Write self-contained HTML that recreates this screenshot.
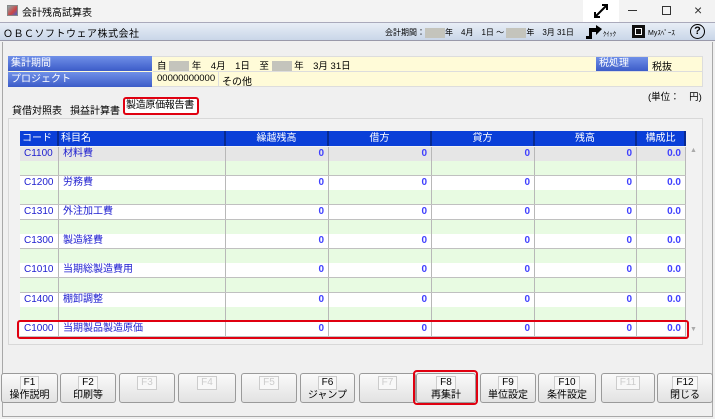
<!DOCTYPE html>
<html><head><meta charset="utf-8"><style>
*{margin:0;padding:0;box-sizing:border-box}
body{width:715px;height:419px;overflow:hidden;background:#f0f0f0;font-family:"Liberation Sans","Noto Sans CJK JP",sans-serif;font-size:10px;color:#000;position:relative}
.a{position:absolute;white-space:nowrap}
.row{position:absolute;left:20px;width:666px;height:15px;border-bottom:1px solid #c0c0c0;display:grid;grid-template-columns:39px 167px 103px 103px 103px 102px 49px;background:#fff}
.row.g{background:#e8fbe2}
.row div{height:14px;border-right:1px solid #b8b8b8;line-height:14px;font-size:10px;color:#2020d0;padding:0 4px;white-space:nowrap;overflow:hidden}
.row div.r{text-align:right;font-weight:bold;color:#4040ff}
.hd{position:absolute;top:0;height:15px;background:#0a3fd8;color:#fff;border-right:2px solid #082a90;line-height:15px;text-align:center;font-size:10px}
.btn{position:absolute;top:373px;height:30px;background:linear-gradient(#fafafa,#e2e2e2);border:1px solid #9a9a9a;border-radius:3px;text-align:center;font-size:10px;line-height:12px}
.btn .k{display:inline-block;margin-top:2px;padding:0 3px;border:1px solid #ccc;background:#f8f8f8}
.btn.d .k{color:#ccc}
.lb{background:linear-gradient(#7090e8,#3c5cc8);color:#fff;padding-left:3px}
.gy{display:inline-block;width:20px;height:10px;background:#c4c4bc;vertical-align:middle}
</style></head><body>
<div class="a" style="left:0;top:0;width:715px;height:22px;background:#f3f3f3"></div>
<div class="a" style="left:7px;top:5px;width:11px;height:11px;background:linear-gradient(135deg,#8aa 0,#c44 60%,#46c 100%);border:1px solid #888"></div>
<div class="a" style="left:22px;top:4px;font-size:10px">会計残高試算表</div>
<div class="a" style="left:583px;top:0;width:36px;height:22px;background:#fff"></div>
<svg class="a" style="left:592px;top:3px" width="18" height="16"><path d="M3 14 L15 2 M10 2 H15 V7 M3 9 V14 H8" stroke="#000" stroke-width="2" fill="none"/></svg>
<div class="a" style="left:628px;top:10px;width:9px;height:1px;background:#333"></div>
<div class="a" style="left:662px;top:6px;width:9px;height:9px;border:1px solid #333"></div>
<div class="a" style="left:694px;top:2px;font-size:14px;color:#333">×</div>
<div class="a" style="left:0;top:22px;width:715px;height:19px;background:linear-gradient(#e8eef6,#c9d6e8);border-top:1px solid #aab;border-bottom:1px solid #99a"></div>
<div class="a" style="left:3px;top:25px;font-size:10px;letter-spacing:.5px">ＯＢＣソフトウェア株式会社</div>
<div class="a" style="left:385px;top:27px;font-size:8px">会計期間：<span class="gy"></span>年　4月　1日 ～ <span class="gy"></span>年　3月 31日</div>
<svg class="a" style="left:585px;top:25px" width="18" height="15"><path d="M1 14 H7 V7 H11 V10 L17 4 L11 0 V3 H4 V11 H1Z" fill="#000"/></svg>
<div class="a" style="left:603px;top:28px;font-size:6.5px">ｸｲｯｸ</div>
<div class="a" style="left:632px;top:25px;width:13px;height:13px;background:#111"></div>
<div class="a" style="left:635px;top:28px;width:7px;height:7px;border:1px solid #fff"></div>
<div class="a" style="left:648px;top:28px;font-size:7px">Myｽﾍﾟｰｽ</div>
<div class="a" style="left:690px;top:24px;width:15px;height:15px;border:1.5px solid #000;border-radius:50%;text-align:center;font-weight:bold;font-size:11px;line-height:12px">?</div>
<div class="a" style="left:2px;top:42px;width:711px;height:375px;border:1px solid #a8a8a8;border-top:none"></div>
<div class="a" style="left:8px;top:56px;width:695px;height:31px;background:#fffbd8;border:1px solid #ddd"></div>
<div class="a lb" style="left:8px;top:56px;width:144px;height:15px;line-height:15px">集計期間</div>
<div class="a lb" style="left:8px;top:72px;width:144px;height:15px;line-height:15px">プロジェクト</div>
<div class="a" style="left:153px;top:71px;width:550px;height:1px;background:#ddd"></div>
<div class="a" style="left:157px;top:58px;font-size:9.5px">自 <span class="gy"></span> 年　4月　1日　至 <span class="gy"></span> 年　3月 31日</div>
<div class="a" style="left:157px;top:73px;font-size:9.5px">00000000000</div>
<div class="a" style="left:218px;top:72px;width:1px;height:15px;background:#ddd"></div>
<div class="a" style="left:222px;top:73px;font-size:10px">その他</div>
<div class="a lb" style="left:596px;top:57px;width:52px;height:14px;line-height:14px">税処理</div>
<div class="a" style="left:652px;top:58px;font-size:10px">税抜</div>
<div class="a" style="left:648px;top:89px;font-size:9.5px">(単位：　円)</div>
<div class="a" style="left:12px;top:102px;font-size:10px">貸借対照表</div>
<div class="a" style="left:70px;top:102px;font-size:10px">損益計算書</div>
<div class="a" style="left:123px;top:97px;width:76px;height:18px;border:2.5px solid #e00010;border-radius:3px;background:#fff;font-size:10px;line-height:13px;padding-left:1px;letter-spacing:-0.3px">製造原価報告書</div>
<div class="a" style="left:8px;top:118px;width:695px;height:227px;border:1px solid #d8d8d8;background:#f2f2f2"></div>
<div class="a" style="left:20px;top:131px;width:666px;height:15px">
<div class="hd" style="left:0;width:39px;text-align:left;padding-left:2px">コード</div>
<div class="hd" style="left:39px;width:167px;text-align:left;padding-left:2px">科目名</div>
<div class="hd" style="left:206px;width:103px">繰越残高</div>
<div class="hd" style="left:309px;width:103px">借方</div>
<div class="hd" style="left:412px;width:103px">貸方</div>
<div class="hd" style="left:515px;width:102px">残高</div>
<div class="hd" style="left:617px;width:49px">構成比</div>
</div>
<div class="row" style="top:146.5px;background:#e6e6e6"><div>C1100</div><div>材料費</div><div class="r">0</div><div class="r">0</div><div class="r">0</div><div class="r">0</div><div class="r">0.0</div></div>
<div class="row g" style="top:161.1px"><div></div><div></div><div></div><div></div><div></div><div></div><div></div></div>
<div class="row" style="top:175.7px"><div>C1200</div><div>労務費</div><div class="r">0</div><div class="r">0</div><div class="r">0</div><div class="r">0</div><div class="r">0.0</div></div>
<div class="row g" style="top:190.3px"><div></div><div></div><div></div><div></div><div></div><div></div><div></div></div>
<div class="row" style="top:204.9px"><div>C1310</div><div>外注加工費</div><div class="r">0</div><div class="r">0</div><div class="r">0</div><div class="r">0</div><div class="r">0.0</div></div>
<div class="row g" style="top:219.5px"><div></div><div></div><div></div><div></div><div></div><div></div><div></div></div>
<div class="row" style="top:234.1px"><div>C1300</div><div>製造経費</div><div class="r">0</div><div class="r">0</div><div class="r">0</div><div class="r">0</div><div class="r">0.0</div></div>
<div class="row g" style="top:248.7px"><div></div><div></div><div></div><div></div><div></div><div></div><div></div></div>
<div class="row" style="top:263.3px"><div>C1010</div><div>当期総製造費用</div><div class="r">0</div><div class="r">0</div><div class="r">0</div><div class="r">0</div><div class="r">0.0</div></div>
<div class="row g" style="top:277.9px"><div></div><div></div><div></div><div></div><div></div><div></div><div></div></div>
<div class="row" style="top:292.5px"><div>C1400</div><div>棚卸調整</div><div class="r">0</div><div class="r">0</div><div class="r">0</div><div class="r">0</div><div class="r">0.0</div></div>
<div class="row g" style="top:307.1px"><div></div><div></div><div></div><div></div><div></div><div></div><div></div></div>
<div class="row" style="top:321.7px"><div>C1000</div><div>当期製品製造原価</div><div class="r">0</div><div class="r">0</div><div class="r">0</div><div class="r">0</div><div class="r">0.0</div></div>
<div class="a" style="left:17px;top:320px;width:672px;height:19px;border:2.5px solid #e00010;border-radius:3px"></div>
<div class="a" style="left:690px;top:147px;font-size:7px;color:#aaa">▲</div>
<div class="a" style="left:690px;top:326px;font-size:7px;color:#aaa">▼</div>
<div class="btn" style="left:1px;width:57px"><span class="k">F1</span><br>操作説明</div>
<div class="btn" style="left:60px;width:56px"><span class="k">F2</span><br>印刷等</div>
<div class="btn d" style="left:119px;width:56px"><span class="k">F3</span></div>
<div class="btn d" style="left:178px;width:58px"><span class="k">F4</span></div>
<div class="btn d" style="left:241px;width:56px"><span class="k">F5</span></div>
<div class="btn" style="left:300px;width:55px"><span class="k">F6</span><br>ジャンプ</div>
<div class="btn d" style="left:359px;width:57px"><span class="k">F7</span></div>
<div class="btn" style="left:416px;width:60px"><span class="k">F8</span><br>再集計</div>
<div class="a" style="left:413px;top:370px;width:65px;height:35px;border:2.5px solid #e00010;border-radius:4px"></div>
<div class="btn" style="left:480px;width:56px"><span class="k">F9</span><br>単位設定</div>
<div class="btn" style="left:538px;width:58px"><span class="k">F10</span><br>条件設定</div>
<div class="btn d" style="left:601px;width:54px"><span class="k">F11</span></div>
<div class="btn" style="left:657px;width:56px"><span class="k">F12</span><br>閉じる</div>
</body></html>
